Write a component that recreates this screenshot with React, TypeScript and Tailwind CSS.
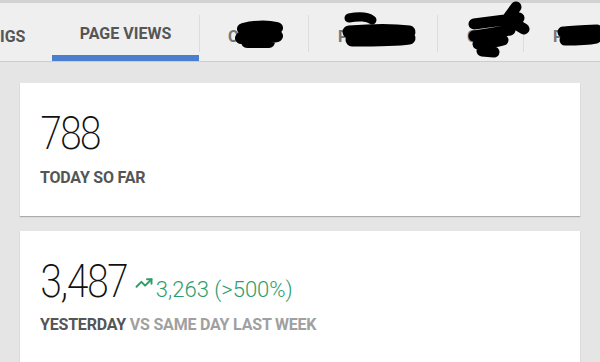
import React from 'react'
import { TrendingUp } from 'lucide-react'

// black marker scribbles that hide some tab names in the screenshot
function Scribbles() {
  return (
    <svg className="absolute left-0 top-0 w-[600px] h-[62px] pointer-events-none" viewBox="0 0 600 62">
      <g fill="none" stroke="#000" strokeLinecap="round" strokeLinejoin="round">
        <path strokeWidth="12" d="M243 29 C256 26 268 26 277 28 M241 38 C255 36 267 38 277 36 M247 42 L269 42" />
        <path strokeWidth="9" d="M349 18 C359 16 368 17 372 20" />
        <path strokeWidth="13" d="M349 32 C372 30 395 30 409 32 M352 40 C374 40 395 40 409 38" />
        <path strokeWidth="11" d="M474 24 C490 22 505 20 519 18 M505 22 L516 7 M509 20 L524 29 M474 36 C488 34 500 32 510 30 M478 44 C488 43 496 42 503 40 M482 51 L494 52" />
        <path strokeWidth="11" d="M563 32 C576 31 588 30 597 30 M565 40 C576 40 586 40 596 38" />
      </g>
    </svg>
  )
}

function Sep() {
  return <div className="w-px h-[37px] bg-[#dcdcdc] mt-[12px]" />
}

function Tabs() {
  return (
    <div className="bg-[#efefef] border-b border-[#cdcdcd] relative">
      <div className="h-[3px] bg-[#d2d2d2]" />
      <div className="flex h-[58px] text-[16px] font-bold">
        <div className="w-[52px] flex items-center pt-[10px]">
          <span className="text-[#555]">IGS</span>
        </div>
        <div className="w-[147px] flex flex-col">
          <div className="flex-1 flex items-center justify-center pt-[10px]">
            <span className="text-[#555]">PAGE VIEWS</span>
          </div>
          <div className="h-[6px] bg-[#4a7fd0]" />
        </div>
        <Sep />
        <div className="w-[108px] flex items-center pl-[28px] pt-[10px]">
          <span className="text-[#777]">C</span>
        </div>
        <Sep />
        <div className="w-[128px] flex items-center pl-[29px] pt-[10px]">
          <span className="text-[#777]">PA</span>
        </div>
        <Sep />
        <div className="w-[85px] flex items-center pl-[29px] pt-[10px]">
          <span className="text-[#777]">C</span>
        </div>
        <Sep />
        <div className="flex-1 flex items-center pl-[29px] pt-[10px]">
          <span className="text-[#777]">P</span>
        </div>
      </div>
      <Scribbles />
    </div>
  )
}

export default function App() {
  return (
    <div className="w-[600px] h-[362px] overflow-hidden bg-[#e5e5e5] font-['Roboto',sans-serif]">
      <Tabs />
      <div className="px-5 pt-[21px] flex flex-col gap-[15px]">
        <div className="bg-white shadow-[0_1px_1px_rgba(0,0,0,0.25)] pl-5 pt-[27px] pb-[30px]">
          <div className="text-[46px] leading-none font-extralight [font-stretch:75%] tracking-[-2.5px] text-[#111]">788</div>
          <div className="mt-[14px] text-[16px] leading-none font-bold tracking-[-0.2px] text-[#555]">TODAY SO FAR</div>
        </div>
        <div className="bg-white shadow-[0_1px_1px_rgba(0,0,0,0.25)] pl-5 pt-[27px] pb-[40px]">
          <div className="flex items-baseline leading-none">
            <span className="text-[46px] font-extralight [font-stretch:75%] tracking-[-2.2px] text-[#111]">3,487</span>
            <TrendingUp className="ml-[8px] text-[#2e9d6a] self-center mt-[4px]" size={18} strokeWidth={2.6} />
            <span className="ml-[3px] text-[22px] font-light text-[#2e9d6a]">3,263 (&gt;500%)</span>
          </div>
          <div className="mt-[13px] text-[16px] leading-none font-bold tracking-[-0.2px]">
            <span className="text-[#555]">YESTERDAY</span>{' '}
            <span className="text-[#a0a0a0]">VS SAME DAY LAST WEEK</span>
          </div>
        </div>
      </div>
    </div>
  )
}
